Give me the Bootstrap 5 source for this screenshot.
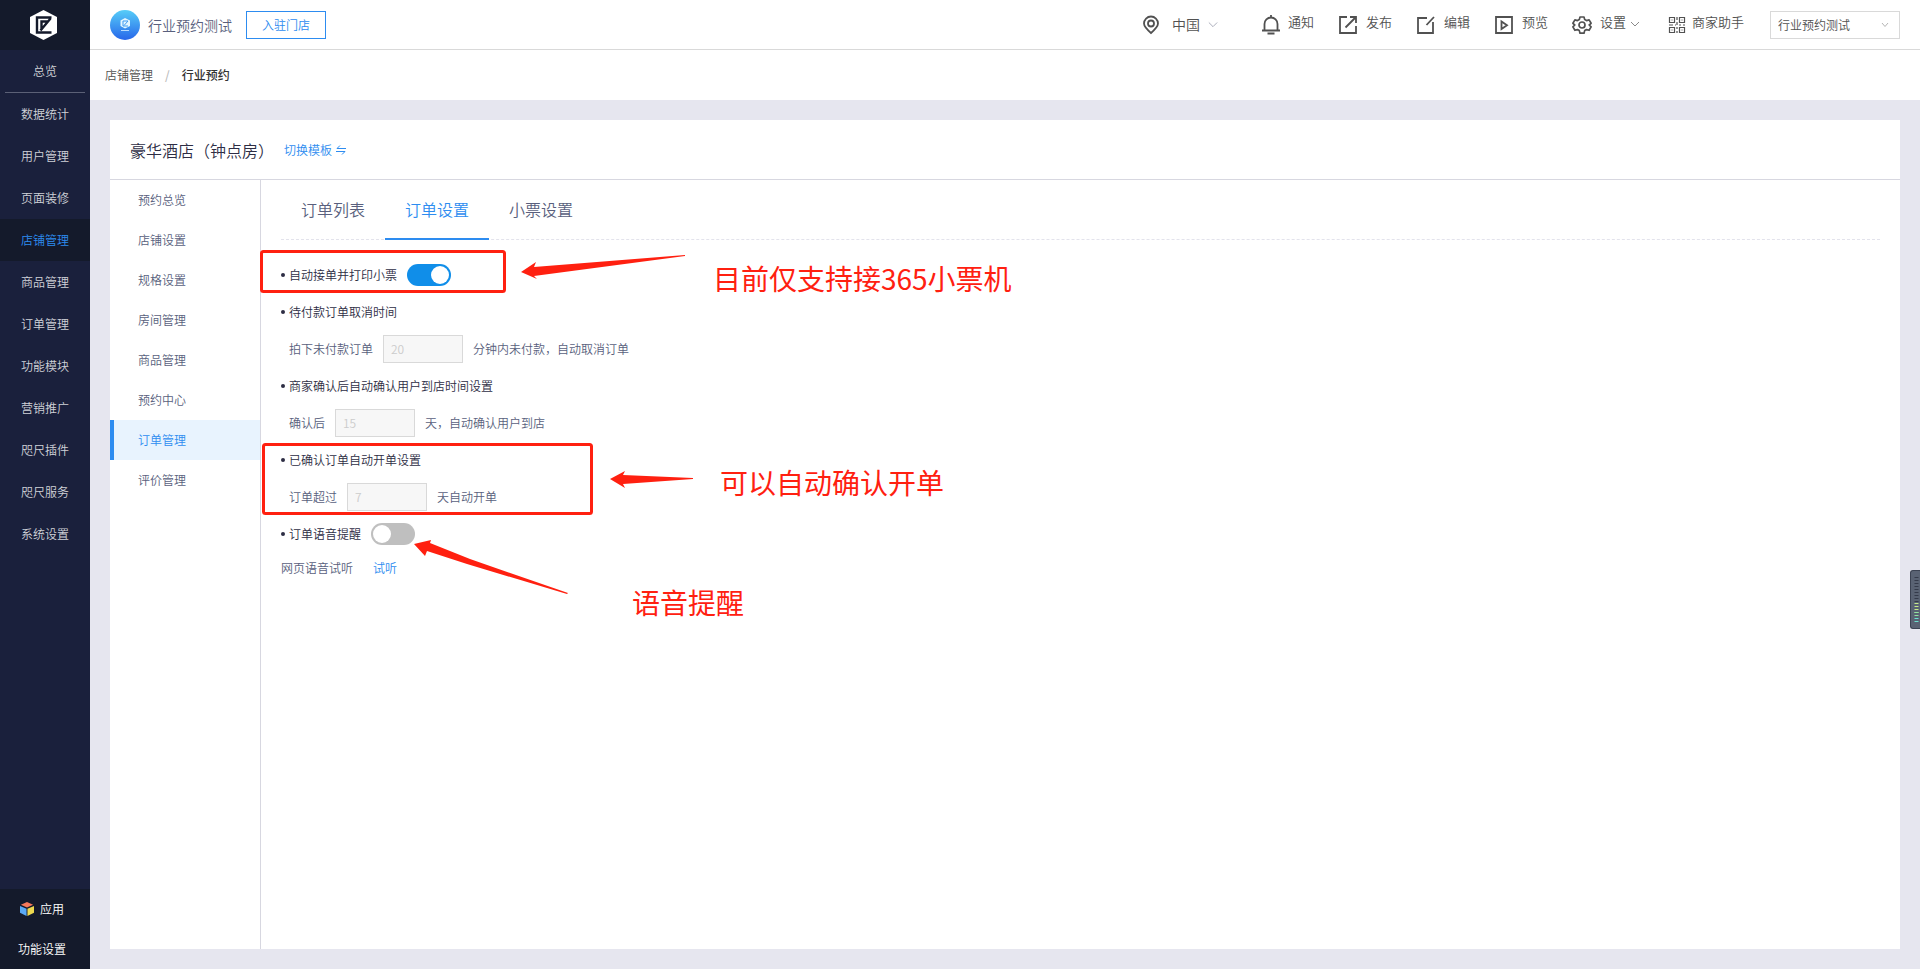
<!DOCTYPE html>
<html lang="zh-CN">
<head>
<meta charset="utf-8">
<meta name="viewport" content="width=device-width, initial-scale=1">
<title>行业预约 - 订单设置</title>
<link rel="stylesheet" href="https://cdn.jsdelivr.net/npm/bootstrap@5.3.0/dist/css/bootstrap.min.css">
<style>
:root { --blue: #2d8cf0; --line: #d7d7e0; --ink: #2d2d44; --text: #595f7d; }
body { font-family: "Noto Sans CJK SC", sans-serif; font-size: 12px; line-height: 20px; font-weight: 350; color: var(--text); background: #e6e6ef; }
a { color: inherit; text-decoration: none; }
.rail { width: 90px; background: #1a203c; color: #d0d2d8; }
.rail-logo, .rail-foot { background: #141a2b; }
.rail-logo { height: 50px; }
.rail .nav-link { height: 42px; padding: 0; display: flex; align-items: center; justify-content: center; color: inherit; }
.rail .nav-link.active { background: #141a2b; color: var(--blue); }
.rail hr { margin: 0 5px; border-color: #5b6076; opacity: 1; }
.rail-foot { color: #fff; }
.rail-foot a { height: 40px; padding-left: 18px; }
.rail-foot svg { margin: 0 6px 0 2px; }
.topbar { height: 50px; padding: 0 20px; border-bottom: 1px solid #d9d9d9; }
.shop-name { font-size: 14px; }
.btn-enter { width: 80px; height: 28px; margin-left: 14px; padding: 0; border: 1px solid var(--blue); border-radius: 0; color: var(--blue); font-size: 12px; font-weight: inherit; }
.tool { font-size: 13px; color: #515151; }
.tool-place { font-size: 14px; margin-right: 44px; }
.tool > span { padding-bottom: 6px; }
.tool-place > span { padding-bottom: 2px; }
.shop-pick { width: 130px; height: 28px; margin-left: 26px; padding: 0 7px; border: 1px solid #d9d9d9; border-radius: 0; font-size: 12px; font-weight: inherit; color: #515151;
  background-image: url("data:image/svg+xml,%3Csvg xmlns='http://www.w3.org/2000/svg' viewBox='0 0 8 6'%3E%3Cpath d='M1 1l3 3.5L7 1' fill='none' stroke='%23b5b5b5'/%3E%3C/svg%3E"); background-size: 8px 6px; background-position: right 10px center; }
.crumbs { height: 50px; padding: 0 15px; color: #515151; --bs-breadcrumb-item-padding-x: 12px; --bs-breadcrumb-divider-color: #bbb; }
.crumbs .active { color: #333; font-weight: 500; }
.panel-head { height: 60px; padding: 0 20px; gap: 10px; border-bottom: 1px solid var(--line); }
.panel-head h1 { font-size: 16px; line-height: 24px; font-weight: inherit; color: var(--ink); }
.text-link { color: var(--blue); }
.subnav { width: 151px; border-right: 1px solid var(--line); }
.subnav .nav-link { height: 40px; padding: 10px 24px; border-left: 4px solid transparent; color: inherit; }
.subnav .nav-link.active { background: #e8f3fe; border-color: var(--blue); color: var(--blue); }
.tabs { height: 60px; border-bottom: 1px dashed #e3e3ec; }
.tabs .nav-link { height: 60px; padding: 17px 20px; font-size: 16px; line-height: 24px; color: inherit; border-bottom: 2px solid transparent; }
.tabs .nav-link.active { color: var(--blue); border-color: var(--blue); }
.pane { padding: 0 20px; }
.setting { height: 37px; gap: 10px; }
.setting-title { color: var(--ink); }
.setting-title > :first-child { display: flex; align-items: center; gap: 4px; }
.setting-title > :first-child::before { content: ""; width: 4px; height: 4px; border-radius: 50%; background: var(--ink); }
.setting-body { padding-left: 8px; }
.setting .form-control { width: 80px; height: 28px; padding: 0 7px; border: 1px solid #d9d9d9; border-radius: 0; background: #f7f7f7; color: #ccc; font-size: 12px; font-weight: inherit; }
.setting .form-check-input { width: 44px; height: 22px; margin: 0; border: 0; background-color: #bfbfbf;
  --bs-form-switch-bg: url("data:image/svg+xml,%3Csvg xmlns='http://www.w3.org/2000/svg' viewBox='0 0 22 22'%3E%3Ccircle cx='11' cy='11' r='9' fill='%23fff'/%3E%3C/svg%3E") !important; background-image: var(--bs-form-switch-bg); }
.setting .form-check-input:checked { background-color: #108ee9; }
.listen { gap: 20px; padding-top: 6px; }
.notes { left: 0; top: 0; overflow: visible; pointer-events: none; fill: #ff2010; font-size: 28px; font-weight: 400; }
.notes rect { fill: none; stroke: #ff2010; stroke-width: 3; }
.meter { right: 0; top: 570px; width: 10px; height: 59px; border: 1px solid #3b4252; border-right: 0; border-radius: 3px 0 0 3px; background: #596273; }
</style>
</head>
<body>
<div class="d-flex min-vh-100">
  <aside class="rail d-flex flex-column flex-shrink-0">
    <a href="#" class="rail-logo d-flex align-items-center justify-content-center pe-1" aria-label="首页">
      <svg width="27" height="30" viewBox="0 0 27 30"><path d="M13.500 0L27 7v16l-13.500 7L0 23V7z" fill="#fff"/><path d="M21.500 7.500H7v15h14.500M20.500 8.500L10.500 20.500M11.500 20V11.500h6" fill="none" stroke="#141a2b" stroke-width="2.400"/></svg>
    </a>
    <nav class="nav flex-column">
      <a class="nav-link" href="#">总览</a>
      <hr>
      <a class="nav-link" href="#">数据统计</a>
      <a class="nav-link" href="#">用户管理</a>
      <a class="nav-link" href="#">页面装修</a>
      <a class="nav-link active" href="#">店铺管理</a>
      <a class="nav-link" href="#">商品管理</a>
      <a class="nav-link" href="#">订单管理</a>
      <a class="nav-link" href="#">功能模块</a>
      <a class="nav-link" href="#">营销推广</a>
      <a class="nav-link" href="#">咫尺插件</a>
      <a class="nav-link" href="#">咫尺服务</a>
      <a class="nav-link" href="#">系统设置</a>
    </nav>
    <div class="rail-foot mt-auto">
      <a href="#" class="d-flex align-items-center">
        <svg width="14" height="14" viewBox="0 0 15 15"><path d="M7.500 0L14 3 7.500 6 1 3z" fill="#f5795b"/><path d="M0 4.200l7 3V15l-7-3.500z" fill="#5aa9f5"/><path d="M15 4.200l-7 3V15l7-3.500z" fill="#ecd84f"/></svg>
        <span>应用</span>
      </a>
      <a href="#" class="d-flex align-items-center">功能设置</a>
    </div>
  </aside>

  <div class="flex-grow-1 d-flex flex-column">
    <header class="topbar bg-white d-flex align-items-center">
      <svg class="me-2" width="30" height="30" viewBox="0 0 30 30"><defs><linearGradient id="sky" x2="0" y2="1"><stop stop-color="#57cdf8"/><stop offset="1" stop-color="#2767ea"/></linearGradient></defs><circle cx="15" cy="15" r="15" fill="url(#sky)"/><path d="M15 8l5 2.500v5.500L15 18.500 10.500 16v-5.500z" fill="#e3f6ff"/><path d="M18 11h-5v5h5M18 11l-4 4.500" fill="none" stroke="#3f9bf2"/><path d="M11 20.500h8" stroke="#b9dcff"/></svg>
      <span class="shop-name">行业预约测试</span>
      <button type="button" class="btn btn-enter">入驻门店</button>

      <a href="#" class="tool tool-place d-flex align-items-center ms-auto">
        <svg width="18" height="20" viewBox="0 0 18 20" fill="none" stroke="#515151" stroke-width="1.800"><path d="M9 18C4.500 14 2 11.500 2 8.500a7 7 0 0 1 14 0C16 11.500 13.500 14 9 18z"/><circle cx="9" cy="8.500" r="3"/></svg>
        <span class="ms-2 ps-1">中国</span>
        <svg class="ms-2" width="10" height="8" viewBox="0 0 12 8" fill="none" stroke="#9a9dae"><path d="M1 1l5 5 5-5"/></svg>
      </a>
      <a href="#" class="tool d-flex align-items-center">
        <svg class="me-2" width="18" height="20" viewBox="0 0 18 20" fill="none" stroke="#515151" stroke-width="1.800"><path d="M0 15.500h18M2.500 15V9a6.500 6.500 0 0 1 13 0v6M9 0v2.500M5.500 18.500h7"/></svg>
        <span>通知</span>
      </a>
      <a href="#" class="tool d-flex align-items-center ms-4">
        <svg class="me-2" width="20" height="20" viewBox="0 0 20 20" fill="none" stroke="#515151" stroke-width="1.800"><path d="M9 2H2v16h16v-7M12 2h6v6M18 2L7.500 12.500"/></svg>
        <span>发布</span>
      </a>
      <a href="#" class="tool d-flex align-items-center ms-4">
        <svg class="me-2" width="20" height="20" viewBox="0 0 20 20" fill="none" stroke="#515151" stroke-width="1.800"><path d="M11 3H2v15h15V7M18 2l-7.500 8"/></svg>
        <span>编辑</span>
      </a>
      <a href="#" class="tool d-flex align-items-center ms-4">
        <svg class="me-2" width="20" height="20" viewBox="0 0 20 20" fill="none" stroke="#515151" stroke-width="1.800"><path d="M2 2h16v16H2zM7.500 6.500v7.500l5.500-3.750z"/></svg>
        <span>预览</span>
      </a>
      <a href="#" class="tool d-flex align-items-center ms-4">
        <svg class="me-2" width="20" height="20" viewBox="0 0 20 20" fill="none" stroke="#515151" stroke-width="1.700" stroke-linejoin="round"><path d="M8 2h4l.7 2.600 1.800 1 2.600-.7 2 3.400L17.200 10l1.900 1.900-2 3.400-2.600-.7-1.800 1L12 18.200H8l-.7-2.600-1.800-1-2.600.7-2-3.400L2.800 10 .9 8.300l2-3.400 2.600.7 1.800-1z"/><circle cx="10" cy="10" r="3"/></svg>
        <span>设置</span>
        <svg class="ms-1" width="10" height="8" viewBox="0 0 10 8" fill="none" stroke="#8a8a8a"><path d="M1 1l4 4 4-4"/></svg>
      </a>
      <a href="#" class="tool d-flex align-items-center ms-4 ps-1 gap-1">
        <svg width="20" height="18" viewBox="0 0 20 18" fill="none" stroke="#515151" stroke-width="1.200"><path d="M1.500 1.500h5v5h-5zM11.500 1.500h5v5h-5zM1.500 11.500h5v5h-5zM11.500 11.500h5v5h-5zM3.500 4h1M13.500 4h1M3.500 14h1M13.500 14h1M9 1v3M9 6v3M1 9h4M7 9h1M11 9h2M15 9h2M9 11v2M9 15v2"/></svg>
        <span>商家助手</span>
      </a>
      <select class="form-select shop-pick" aria-label="选择店铺"><option>行业预约测试</option></select>
    </header>

    <nav class="bg-white" aria-label="面包屑">
      <ol class="breadcrumb crumbs align-items-center mb-0">
        <li class="breadcrumb-item"><a href="#">店铺管理</a></li>
        <li class="breadcrumb-item active">行业预约</li>
      </ol>
    </nav>

    <main class="bg-white flex-grow-1 d-flex flex-column" style="margin:20px">
      <div class="panel-head d-flex align-items-center">
        <h1 class="mb-0">豪华酒店（钟点房）</h1>
        <a href="#" class="text-link d-flex align-items-center gap-1">切换模板
          <svg width="10" height="10" viewBox="0 0 10 10" fill="none" stroke="#2d8cf0"><path d="M4 .5L1 3.500h9M0 6.500h9L6 9.500"/></svg></a>
      </div>
      <div class="d-flex flex-grow-1">
        <nav class="subnav nav flex-column flex-shrink-0">
          <a class="nav-link" href="#">预约总览</a>
          <a class="nav-link" href="#">店铺设置</a>
          <a class="nav-link" href="#">规格设置</a>
          <a class="nav-link" href="#">房间管理</a>
          <a class="nav-link" href="#">商品管理</a>
          <a class="nav-link" href="#">预约中心</a>
          <a class="nav-link active" href="#">订单管理</a>
          <a class="nav-link" href="#">评价管理</a>
        </nav>
        <section class="pane flex-grow-1 position-relative">
          <nav class="tabs nav mb-3">
            <a class="nav-link" href="#">订单列表</a>
            <a class="nav-link active" href="#">订单设置</a>
            <a class="nav-link" href="#">小票设置</a>
          </nav>
          <form>
            <div class="setting setting-title form-switch ps-0 mb-0 d-flex align-items-center">
              <label for="auto">自动接单并打印小票</label>
              <input class="form-check-input" type="checkbox" role="switch" id="auto" checked>
            </div>
            <div class="setting setting-title d-flex align-items-center"><span>待付款订单取消时间</span></div>
            <div class="setting setting-body d-flex align-items-center">
              <label for="unpaid">拍下未付款订单</label>
              <input class="form-control" id="unpaid" value="20" disabled>
              <span>分钟内未付款，自动取消订单</span>
            </div>
            <div class="setting setting-title d-flex align-items-center"><span>商家确认后自动确认用户到店时间设置</span></div>
            <div class="setting setting-body d-flex align-items-center">
              <label for="arrive">确认后</label>
              <input class="form-control" id="arrive" value="15" disabled>
              <span>天，自动确认用户到店</span>
            </div>
            <div class="setting setting-title d-flex align-items-center"><span>已确认订单自动开单设置</span></div>
            <div class="setting setting-body d-flex align-items-center">
              <label for="open">订单超过</label>
              <input class="form-control" id="open" value="7" disabled>
              <span>天自动开单</span>
            </div>
            <div class="setting setting-title form-switch ps-0 mb-0 d-flex align-items-center">
              <label for="voice">订单语音提醒</label>
              <input class="form-check-input" type="checkbox" role="switch" id="voice">
            </div>
            <div class="listen d-flex"><span>网页语音试听</span><a href="#" class="text-link">试听</a></div>
          </form>
          <!-- Callouts laid over the form -->
          <svg class="notes position-absolute" width="720" height="450" viewBox="0 0 720 450">
            <rect x="0.500" y="71.500" width="243" height="40" rx="2"/>
            <rect x="2.500" y="264.500" width="328" height="69" rx="2"/>
            <path d="M260 92l15-10-2 5 151-12v1L273 96l3 3z"/>
            <path d="M349 299l15-8-2 4 70 3v1l-70 5 2 4z"/>
            <path d="M153 364l17-4-1 3 40 16 98 34-1 1-100-30-40-13-2 5z"/>
            <text x="452" y="110">目前仅支持接365小票机</text>
            <text x="459" y="314">可以自动确认开单</text>
            <text x="371" y="434">语音提醒</text>
          </svg>
        </section>
      </div>
    </main>
  </div>
</div>
<svg class="meter position-fixed" viewBox="0 0 9 57" stroke-width="4" fill="none" aria-hidden="true">
  <path d="M5.500 6v25" stroke="#343a4a" stroke-dasharray="1 2"/>
  <path d="M5.500 32v10" stroke="#c5e88a" stroke-dasharray="1 2"/>
  <path d="M5.500 41v6" stroke="#8fe3a0" stroke-dasharray="1 2"/>
  <path d="M5.500 47v6" stroke="#6be0cf" stroke-dasharray="1 2"/>
</svg>
<script src="https://cdn.jsdelivr.net/npm/bootstrap@5.3.0/dist/js/bootstrap.bundle.min.js"></script>
</body>
</html>
